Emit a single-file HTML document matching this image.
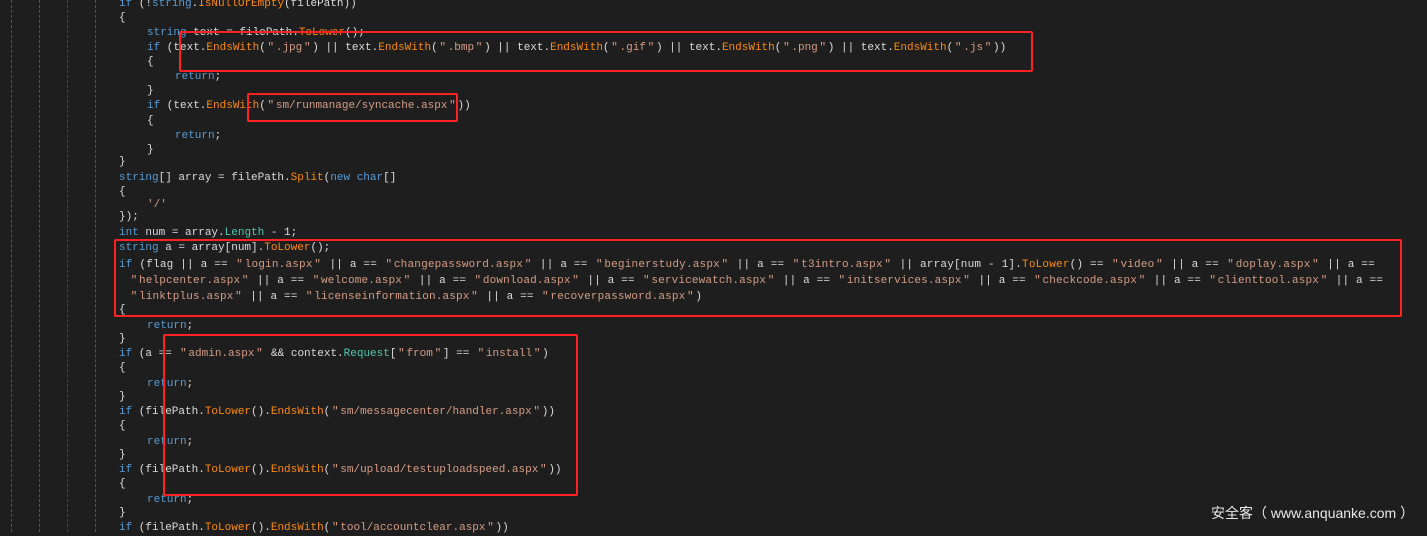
<!DOCTYPE html>
<html><head><meta charset="utf-8">
<style>
html,body{margin:0;padding:0;}
body{width:1427px;height:532px;background:#1e1e1e;position:relative;overflow:hidden;font-family:"Liberation Mono","Noto Sans CJK SC",monospace;font-size:11px;color:#dcdcdc;}
.l{position:absolute;white-space:pre;height:15px;line-height:15px;}
.k{color:#569cd6}.m{color:#ff8a0a}.s{color:#d69d85}.t{color:#4ec9b0}
.q{display:inline-block;width:10px;text-align:center;color:#d69d85}
.g{position:absolute;top:0;height:532px;width:0;border-left:1px dashed}
.b{position:absolute;border:2px solid #ff2222;border-radius:2px;}
.wm{position:absolute;left:1211px;top:503px;font-family:"Liberation Sans","Noto Sans CJK SC",sans-serif;font-size:14px;color:#e8e8e8;white-space:pre}
</style></head><body>
<div class="g" style="left:11px;border-color:#555"></div>
<div class="g" style="left:39px;border-color:#2e6b45"></div>
<div class="g" style="left:67px;border-color:#2a4d6e"></div>
<div class="g" style="left:95px;border-color:#2e6b45"></div>

<div class="l" style="left:119px;top:-3px"><span class="k">if</span> (!<span class="k">string</span>.<span class="m">IsNullOrEmpty</span>(filePath))</div>
<div class="l" style="left:119px;top:11px">{</div>
<div class="l" style="left:147px;top:26px"><span class="k">string</span> text = filePath.<span class="m">ToLower</span>();</div>
<div class="l" style="left:147px;top:41px"><span class="k">if</span> (text.<span class="m">EndsWith</span>(<span class="q">"</span><span class="s">.jpg</span><span class="q">"</span>) || text.<span class="m">EndsWith</span>(<span class="q">"</span><span class="s">.bmp</span><span class="q">"</span>) || text.<span class="m">EndsWith</span>(<span class="q">"</span><span class="s">.gif</span><span class="q">"</span>) || text.<span class="m">EndsWith</span>(<span class="q">"</span><span class="s">.png</span><span class="q">"</span>) || text.<span class="m">EndsWith</span>(<span class="q">"</span><span class="s">.js</span><span class="q">"</span>))</div>
<div class="l" style="left:147px;top:55px">{</div>
<div class="l" style="left:175px;top:70px"><span class="k">return</span>;</div>
<div class="l" style="left:147px;top:84px">}</div>
<div class="l" style="left:147px;top:99px"><span class="k">if</span> (text.<span class="m">EndsWith</span>(<span class="q">"</span><span class="s">sm/runmanage/syncache.aspx</span><span class="q">"</span>))</div>
<div class="l" style="left:147px;top:114px">{</div>
<div class="l" style="left:175px;top:129px"><span class="k">return</span>;</div>
<div class="l" style="left:147px;top:143px">}</div>
<div class="l" style="left:119px;top:155px">}</div>
<div class="l" style="left:119px;top:171px"><span class="k">string</span>[] array = filePath.<span class="m">Split</span>(<span class="k">new</span> <span class="k">char</span>[]</div>
<div class="l" style="left:119px;top:185px">{</div>
<div class="l" style="left:147px;top:198px"><span class="s">'/'</span></div>
<div class="l" style="left:119px;top:210px">});</div>
<div class="l" style="left:119px;top:226px"><span class="k">int</span> num = array.<span class="t">Length</span> - 1;</div>
<div class="l" style="left:119px;top:241px"><span class="k">string</span> a = array[num].<span class="m">ToLower</span>();</div>
<div class="l" style="left:119px;top:258px;letter-spacing:0.2px"><span class="k">if</span> (flag || a == <span class="q">"</span><span class="s">login.aspx</span><span class="q">"</span> || a == <span class="q">"</span><span class="s">changepassword.aspx</span><span class="q">"</span> || a == <span class="q">"</span><span class="s">beginerstudy.aspx</span><span class="q">"</span> || a == <span class="q">"</span><span class="s">t3intro.aspx</span><span class="q">"</span> || array[num - 1].<span class="m">ToLower</span>() == <span class="q">"</span><span class="s">video</span><span class="q">"</span> || a == <span class="q">"</span><span class="s">doplay.aspx</span><span class="q">"</span> || a ==</div>
<div class="l" style="left:129px;top:274px;letter-spacing:0.15px"><span class="q">"</span><span class="s">helpcenter.aspx</span><span class="q">"</span> || a == <span class="q">"</span><span class="s">welcome.aspx</span><span class="q">"</span> || a == <span class="q">"</span><span class="s">download.aspx</span><span class="q">"</span> || a == <span class="q">"</span><span class="s">servicewatch.aspx</span><span class="q">"</span> || a == <span class="q">"</span><span class="s">initservices.aspx</span><span class="q">"</span> || a == <span class="q">"</span><span class="s">checkcode.aspx</span><span class="q">"</span> || a == <span class="q">"</span><span class="s">clienttool.aspx</span><span class="q">"</span> || a ==</div>
<div class="l" style="left:129px;top:290px;letter-spacing:0.15px"><span class="q">"</span><span class="s">linktplus.aspx</span><span class="q">"</span> || a == <span class="q">"</span><span class="s">licenseinformation.aspx</span><span class="q">"</span> || a == <span class="q">"</span><span class="s">recoverpassword.aspx</span><span class="q">"</span>)</div>
<div class="l" style="left:119px;top:303px">{</div>
<div class="l" style="left:147px;top:319px"><span class="k">return</span>;</div>
<div class="l" style="left:119px;top:332px">}</div>
<div class="l" style="left:119px;top:347px"><span class="k">if</span> (a == <span class="q">"</span><span class="s">admin.aspx</span><span class="q">"</span> &amp;&amp; context.<span class="t">Request</span>[<span class="q">"</span><span class="s">from</span><span class="q">"</span>] == <span class="q">"</span><span class="s">install</span><span class="q">"</span>)</div>
<div class="l" style="left:119px;top:361px">{</div>
<div class="l" style="left:147px;top:377px"><span class="k">return</span>;</div>
<div class="l" style="left:119px;top:390px">}</div>
<div class="l" style="left:119px;top:405px"><span class="k">if</span> (filePath.<span class="m">ToLower</span>().<span class="m">EndsWith</span>(<span class="q">"</span><span class="s">sm/messagecenter/handler.aspx</span><span class="q">"</span>))</div>
<div class="l" style="left:119px;top:419px">{</div>
<div class="l" style="left:147px;top:435px"><span class="k">return</span>;</div>
<div class="l" style="left:119px;top:448px">}</div>
<div class="l" style="left:119px;top:463px"><span class="k">if</span> (filePath.<span class="m">ToLower</span>().<span class="m">EndsWith</span>(<span class="q">"</span><span class="s">sm/upload/testuploadspeed.aspx</span><span class="q">"</span>))</div>
<div class="l" style="left:119px;top:477px">{</div>
<div class="l" style="left:147px;top:493px"><span class="k">return</span>;</div>
<div class="l" style="left:119px;top:506px">}</div>
<div class="l" style="left:119px;top:521px"><span class="k">if</span> (filePath.<span class="m">ToLower</span>().<span class="m">EndsWith</span>(<span class="q">"</span><span class="s">tool/accountclear.aspx</span><span class="q">"</span>))</div>

<div class="b" style="left:179px;top:31px;width:850px;height:37px"></div>
<div class="b" style="left:247px;top:93px;width:207px;height:25px"></div>
<div class="b" style="left:114px;top:239px;width:1284px;height:74px"></div>
<div class="b" style="left:163px;top:334px;width:411px;height:158px"></div>

<div class="wm">安全客（ www.anquanke.com ）</div>
</body></html>
